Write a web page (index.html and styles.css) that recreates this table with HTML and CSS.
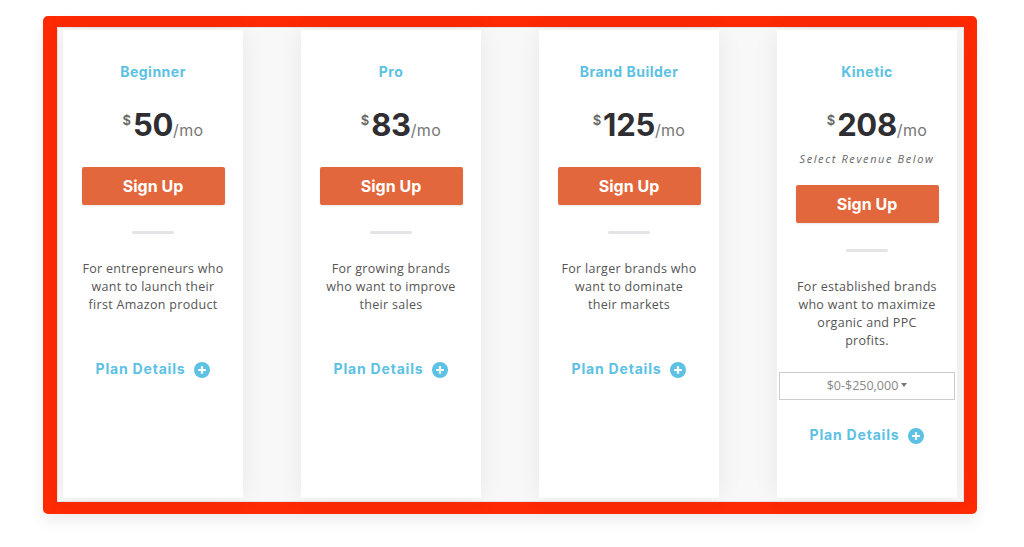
FILE: index.html
```html
<!DOCTYPE html>
<html>
<head>
<meta charset="utf-8">
<link rel="stylesheet" href="styles.css">
</head>
<body>
<div class="frame">
  <div class="inner">
    <div class="card">
      <div class="title">Beginner</div>
      <div class="price"><span class="cur">$</span><span class="amt">50</span><span class="per">/mo</span></div>
      <button class="signup">Sign Up</button>
      <div class="divider"></div>
      <p class="desc">For entrepreneurs who<br>want to launch their<br>first Amazon product</p>
      <div class="details">Plan Details <span class="plus"><svg viewBox="0 0 16 16" width="16" height="16"><circle cx="8" cy="8" r="8" fill="#5cc1e3"/><path d="M8 4.2v7.6M4.2 8h7.6" stroke="#fff" stroke-width="2.2"/></svg></span></div>
    </div>
    <div class="card">
      <div class="title">Pro</div>
      <div class="price"><span class="cur">$</span><span class="amt">83</span><span class="per">/mo</span></div>
      <button class="signup">Sign Up</button>
      <div class="divider"></div>
      <p class="desc">For growing brands<br>who want to improve<br>their sales</p>
      <div class="details">Plan Details <span class="plus"><svg viewBox="0 0 16 16" width="16" height="16"><circle cx="8" cy="8" r="8" fill="#5cc1e3"/><path d="M8 4.2v7.6M4.2 8h7.6" stroke="#fff" stroke-width="2.2"/></svg></span></div>
    </div>
    <div class="card">
      <div class="title">Brand Builder</div>
      <div class="price"><span class="cur">$</span><span class="amt">125</span><span class="per">/mo</span></div>
      <button class="signup">Sign Up</button>
      <div class="divider"></div>
      <p class="desc">For larger brands who<br>want to dominate<br>their markets</p>
      <div class="details">Plan Details <span class="plus"><svg viewBox="0 0 16 16" width="16" height="16"><circle cx="8" cy="8" r="8" fill="#5cc1e3"/><path d="M8 4.2v7.6M4.2 8h7.6" stroke="#fff" stroke-width="2.2"/></svg></span></div>
    </div>
    <div class="card">
      <div class="title">Kinetic</div>
      <div class="price"><span class="cur">$</span><span class="amt">208</span><span class="per">/mo</span></div>
      <div class="note">Select Revenue Below</div>
      <button class="signup signup-note">Sign Up</button>
      <div class="divider"></div>
      <p class="desc">For established brands<br>who want to maximize<br>organic and PPC<br>profits.</p>
      <div class="select">$0-$250,000 <span class="caret"></span></div>
      <div class="details details-select">Plan Details <span class="plus"><svg viewBox="0 0 16 16" width="16" height="16"><circle cx="8" cy="8" r="8" fill="#5cc1e3"/><path d="M8 4.2v7.6M4.2 8h7.6" stroke="#fff" stroke-width="2.2"/></svg></span></div>
    </div>
  </div>
</div>
</body>
</html>
```

FILE: styles.css
```css
* { box-sizing: border-box; }
html, body { margin: 0; padding: 0; background: #fff; }
body { width: 1024px; height: 547px; overflow: hidden; }

.frame {
  margin: 16px 0 0 43px;
  width: 934px;
  height: 498px;
  border-style: solid;
  border-color: #fd2a04;
  border-width: 11px 13px 12px 14px;
  border-radius: 5px;
  box-shadow: 0 8px 14px rgba(0, 0, 0, 0.07);
}

.inner {
  height: 100%;
  background: #f8f8f9;
  border: 1px solid #e6e6ea;
  padding: 2px 6px 3px 5px;
  display: flex;
  gap: 58px;
}

.card {
  width: 180px;
  flex: none;
  background: #fff;
  box-shadow: 0 0 24px rgba(0, 0, 0, 0.07);
  display: flex;
  flex-direction: column;
  align-items: center;
  text-align: center;
  padding-top: 33px;
}

.title {
  font-family: Inter, "Open Sans", sans-serif;
  font-weight: 700;
  font-size: 14px;
  line-height: 18px;
  color: #5cc1e3;
  letter-spacing: 0.5px;
}

.price {
  margin-top: 26px;
  width: 100%;
  height: 36px;
  line-height: 36px;
  font-family: Inter, "Open Sans", sans-serif;
  color: #2f2f33;
  display: grid;
  grid-template-columns: 1fr auto 1fr;
  align-items: baseline;
}
.cur {
  justify-self: end;
  font-size: 13px;
  font-weight: 600;
  color: #666;
  align-self: start;
  line-height: 26px;
  margin-right: 2px;
}
.amt {
  font-size: 31px;
  font-weight: 700;
  letter-spacing: -0.3px;
}
.per {
  justify-self: start;
  font-size: 16px;
  color: #777;
  font-weight: 400;
  letter-spacing: 0.3px;
}

.note {
  margin-top: 8px;
  font-family: "Open Sans", sans-serif;
  font-style: italic;
  font-size: 11px;
  line-height: 16px;
  letter-spacing: 1.6px;
  color: #666;
}

.signup {
  margin-top: 24px;
  width: 143px;
  height: 38px;
  border: none;
  border-radius: 2px;
  background: #e2673c;
  color: #fff;
  font-family: Inter, "Open Sans", sans-serif;
  font-weight: 700;
  font-size: 16px;
  padding: 0;
  box-shadow: 0 1px 2px rgba(0, 0, 0, 0.1);
}
.signup-note { margin-top: 18px; }

.divider {
  margin-top: 26px;
  width: 42px;
  height: 3px;
  border-radius: 2px;
  background: #e4e4e6;
}

.desc {
  margin: 26px 0 0;
  font-family: "Open Sans", sans-serif;
  font-size: 12.5px;
  line-height: 18px;
  letter-spacing: 0.3px;
  color: #555;
}

.details {
  margin-top: 45px;
  display: flex;
  align-items: center;
  gap: 9px;
  font-family: Inter, "Open Sans", sans-serif;
  font-weight: 700;
  font-size: 14px;
  line-height: 20px;
  color: #5cc1e3;
  letter-spacing: 0.8px;
}
.details-select { margin-top: 25px; }
.plus { display: flex; margin-top: 2px; }

.select {
  margin-top: 22px;
  width: 176px;
  height: 28px;
  border: 1px solid #ccc;
  font-family: "Open Sans", sans-serif;
  font-size: 12.5px;
  line-height: 26px;
  color: #888;
  display: flex;
  justify-content: center;
  align-items: center;
  gap: 3px;
}
.caret {
  width: 0;
  height: 0;
  border-left: 3px solid transparent;
  border-right: 3px solid transparent;
  border-top: 4px solid #777;
  margin-top: -3px;
}
```
